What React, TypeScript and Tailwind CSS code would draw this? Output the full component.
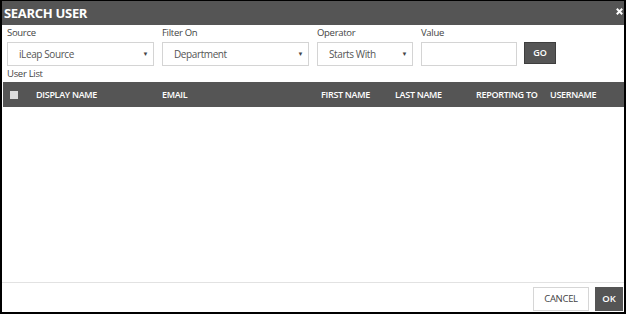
export default function App() {
  const font = { fontFamily: '"Open Sans", "Noto Sans", sans-serif' };
  return (
    <div
      className="flex h-[314px] w-[626px] flex-col overflow-hidden border-2 border-t border-black bg-white text-[#333]"
      style={font}
    >
      {/* title bar */}
      <div className="flex h-[24px] shrink-0 items-center justify-between bg-[#555555] pl-[2px] pr-[1px]">
        <span className="text-[13px] font-bold leading-none tracking-[-0.3px] text-white">SEARCH USER</span>
        <svg width="7" height="7" viewBox="0 0 7 7" className="mb-[4px]">
          <path d="M0.8 0.8 L6.2 6.2 M6.2 0.8 L0.8 6.2" stroke="white" strokeWidth="2" />
        </svg>
      </div>

      {/* filters */}
      <div className="flex gap-[8px] pl-[5px]">
        <div className="flex flex-col">
          <label className="h-[17px] text-[9.5px] leading-[15px] tracking-[-0.3px] text-[#444]">Source</label>
          <div className="flex h-[24px] w-[147px] items-center justify-between border border-[#d4d4d4] pl-[11px] pr-[5px] text-[10px] tracking-[-0.4px] text-[#555]">
            <span>iLeap Source</span>
            <span className="text-[6px] text-[#444]">▼</span>
          </div>
        </div>
        <div className="flex flex-col">
          <label className="h-[17px] text-[9.5px] leading-[15px] tracking-[-0.3px] text-[#444]">Filter On</label>
          <div className="flex h-[24px] w-[147px] items-center justify-between border border-[#d4d4d4] pl-[11px] pr-[5px] text-[10px] tracking-[-0.4px] text-[#555]">
            <span>Department</span>
            <span className="text-[6px] text-[#444]">▼</span>
          </div>
        </div>
        <div className="flex flex-col">
          <label className="h-[17px] text-[9.5px] leading-[15px] tracking-[-0.3px] text-[#444]">Operator</label>
          <div className="flex h-[24px] w-[96px] items-center justify-between border border-[#d4d4d4] pl-[11px] pr-[5px] text-[10px] tracking-[-0.4px] text-[#555]">
            <span>Starts With</span>
            <span className="text-[6px] text-[#444]">▼</span>
          </div>
        </div>
        <div className="flex flex-col">
          <label className="h-[17px] text-[9.5px] leading-[15px] tracking-[-0.3px] text-[#444]">Value</label>
          <div className="h-[24px] w-[96px] border border-[#d4d4d4]" />
        </div>
        <div className="-ml-[1px] flex flex-col">
          <div className="h-[17px]" />
          <button className="h-[22px] w-[32px] border border-[#3e3e3e] bg-[#555555] text-[9px] font-semibold text-white">
            GO
          </button>
        </div>
      </div>

      <div className="h-[16px] pl-[5px] text-[9.5px] leading-[16px] tracking-[-0.3px] text-[#444]">User List</div>

      {/* table */}
      <div className="ml-[1px] grid h-[25px] shrink-0 grid-cols-[33px_126px_159px_74px_81px_74px_1fr] items-center bg-[#555555] text-[9px] font-semibold tracking-[-0.3px] text-white">
        <div className="pl-[7px]">
          <div className="h-[8px] w-[8px] bg-[#dcdcdc]" />
        </div>
        <div>DISPLAY NAME</div>
        <div>EMAIL</div>
        <div>FIRST NAME</div>
        <div>LAST NAME</div>
        <div>REPORTING TO</div>
        <div>USERNAME</div>
      </div>
      <div className="flex-1" />

      {/* footer */}
      <div className="flex h-[30px] shrink-0 items-start justify-end gap-[6px] border-t border-[#e2e2e2] pr-[1px] pt-[4px]">
        <button className="h-[24px] w-[56px] border border-[#d6d6d6] bg-white text-[9.5px] tracking-[-0.3px] text-[#444]">
          CANCEL
        </button>
        <button className="h-[24px] w-[28px] bg-[#555555] text-[9.5px] font-semibold text-white">OK</button>
      </div>
    </div>
  );
}
